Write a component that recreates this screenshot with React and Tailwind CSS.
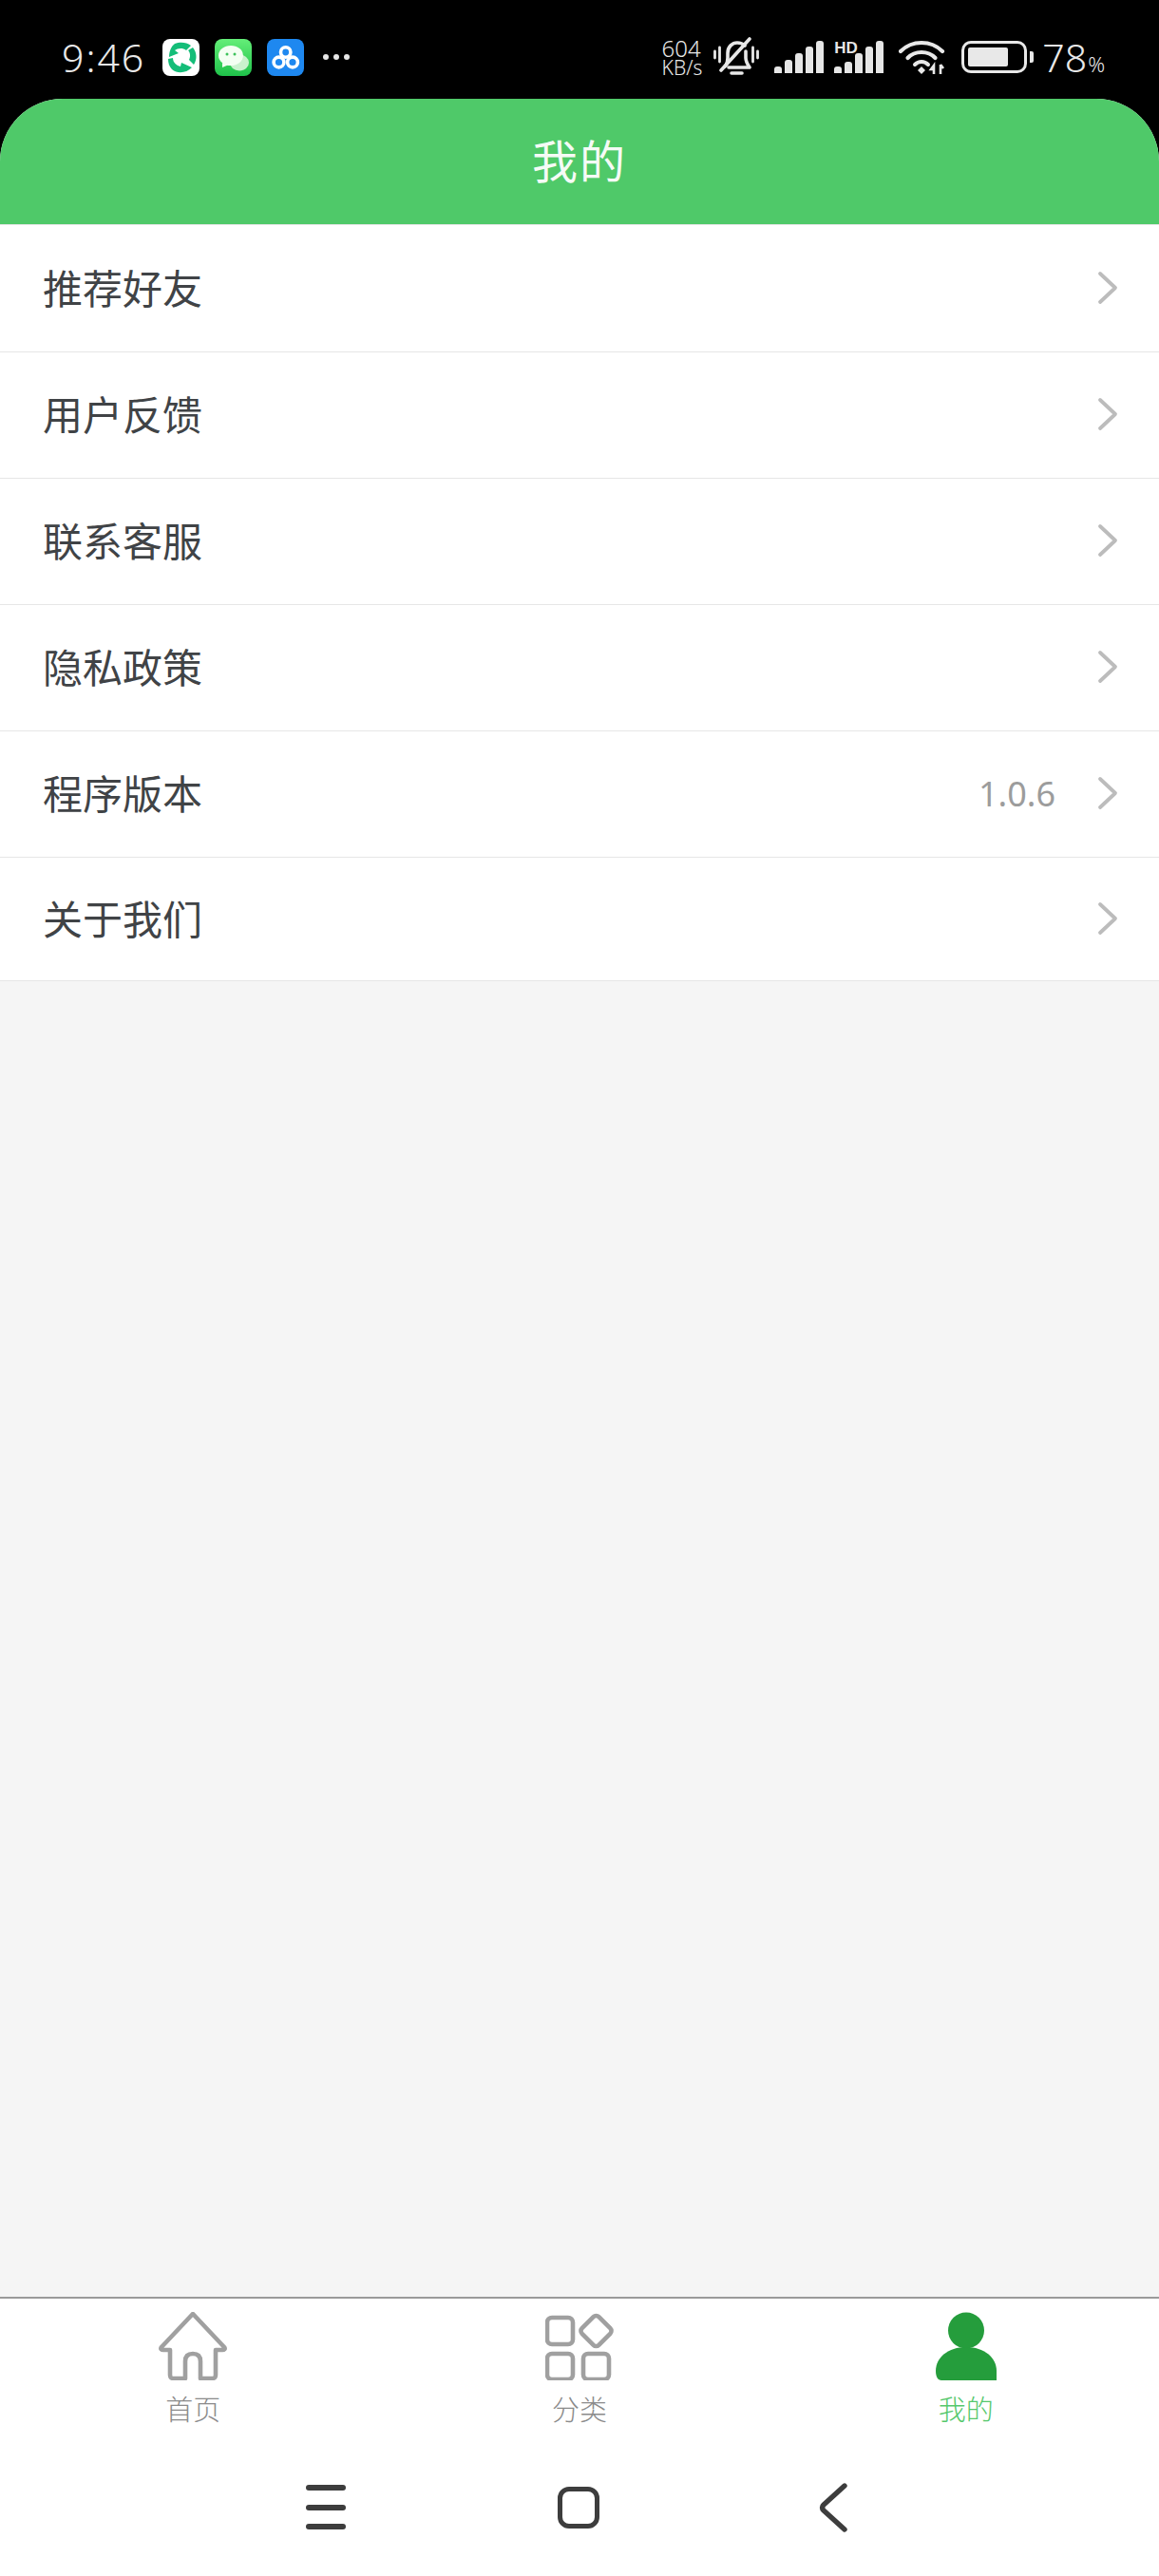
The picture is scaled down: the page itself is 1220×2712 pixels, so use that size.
import React from "react";

const cjk = { fontFamily: '"Noto Sans CJK SC", "Noto Sans", sans-serif' };

const rows = [
  { t: "推荐好友", h: "h-[134px]" },
  { t: "用户反馈", h: "h-[133px]" },
  { t: "联系客服", h: "h-[133px]" },
  { t: "隐私政策", h: "h-[133px]" },
  { t: "程序版本", h: "h-[133px]", v: "1.0.6" },
  { t: "关于我们", h: "h-[130px]" },
];

function Chevron() {
  return (
    <svg width="22" height="36" viewBox="0 0 22 36" fill="none" className="block mb-[2px]">
      <path d="M3 3 L19 18 L3 33" stroke="#bcbcbc" strokeWidth="3.8" strokeLinecap="round" strokeLinejoin="round" />
    </svg>
  );
}

function Row({ t, h, v }) {
  return (
    <div className={`flex items-center bg-white border-b border-[#e6e6e6] pl-[45px] pr-[43px] ${h}`}>
      <span className="text-[42px] leading-none text-[#404346] flex-1 mb-[4px]" style={cjk}>{t}</span>
      {v && <span className="text-[36px] leading-none text-[#9c9c9c] mr-[44px] font-['Noto_Sans',sans-serif] font-normal">{v}</span>}
      <Chevron />
    </div>
  );
}

function AppIcons() {
  return (
    <div className="flex items-center gap-[16px] ml-[18px]">
      <svg width="39" height="39" viewBox="0 0 39 39">
        <rect width="39" height="39" rx="8" fill="#fff" />
        <path d="M13 5 C18 3 25 3 30 7 L25 12 C21 9 16 10 13 12 L17 15 L7 19 C7 13 9 8 13 5 Z" fill="#14bd78" />
        <path d="M32 9 C36 14 37 21 33 27 L28 22 C30 18 29 14 27 12 Z" fill="#14bd78" />
        <path d="M6 21 L11 20 C11 25 15 28 19 29 L20 25 L31 30 C25 36 16 37 10 32 C7 29 6 25 6 21 Z" fill="#14bd78" />
      </svg>
      <svg width="39" height="39" viewBox="0 0 39 39">
        <defs>
          <linearGradient id="wx" x1="0" y1="0" x2="0" y2="1">
            <stop offset="0" stopColor="#64ee78" />
            <stop offset="1" stopColor="#1fc24a" />
          </linearGradient>
        </defs>
        <rect width="39" height="39" rx="8" fill="url(#wx)" />
        <ellipse cx="26" cy="25" rx="10" ry="8.5" fill="#c9f2cd" />
        <ellipse cx="17" cy="17.5" rx="13" ry="10.5" fill="#f3fff2" />
        <path d="M8 25 L8 30 L15 27 Z" fill="#f3fff2" />
        <circle cx="13" cy="16" r="1.5" fill="#3cc25a" />
        <circle cx="21" cy="16" r="1.5" fill="#3cc25a" />
      </svg>
      <svg width="39" height="39" viewBox="0 0 39 39">
        <rect width="39" height="39" rx="8" fill="#1e88f0" />
        <g fill="none" stroke="#fff" strokeWidth="3.6">
          <circle cx="19.7" cy="14" r="5.2" />
          <circle cx="12.5" cy="24.5" r="5.4" />
          <circle cx="27" cy="24.5" r="5.4" />
        </g>
      </svg>
      <div className="flex items-center gap-[5px] ml-[4px]">
        <div className="w-[6px] h-[6px] rounded-full bg-[#e6e6e6]" />
        <div className="w-[6px] h-[6px] rounded-full bg-[#e6e6e6]" />
        <div className="w-[6px] h-[6px] rounded-full bg-[#e6e6e6]" />
      </div>
    </div>
  );
}

function Bell() {
  return (
    <svg width="48" height="42" viewBox="0 0 48 42" fill="none" stroke="#e8e8e8" className="block">
      <path d="M1.5 15 V22 M6.5 11 V26 M46.5 15 V22 M41.5 11 V26" strokeWidth="2.8" strokeLinecap="round" />
      <path d="M12 31 C14 29 15 26 15 22 V17 C15 10 20 6 25 6 C28 6 31 7 33 9 M34 15 V22 C34 26 36 29 38 32 H16" strokeWidth="3.6" strokeLinecap="round" strokeLinejoin="round" />
      <path d="M8 35 L38 2" strokeWidth="3.6" strokeLinecap="round" />
      <path d="M19 38 H30" strokeWidth="3.6" strokeLinecap="round" />
    </svg>
  );
}

function Signal({ hd }) {
  const hs = [7, 14, 21, 28, 34];
  return (
    <div className="relative w-[54px] h-[34px] flex items-end gap-[3.6px]">
      {hs.map((x, i) => (
        <div
          key={i}
          className="bg-[#e6e6e6] w-[7.4px] rounded-t-[3px]"
          style={{ height: hd && i < 2 ? Math.min(x, 8 + i * 4) : x }}
        />
      ))}
      {hd && (
        <span className="absolute left-0 top-[-1px] text-[17px] leading-none font-bold text-[#e6e6e6] font-['Liberation_Sans',sans-serif]">
          HD
        </span>
      )}
    </div>
  );
}

function Wifi() {
  return (
    <svg width="50" height="38" viewBox="0 0 50 38" fill="none" stroke="#e8e8e8" className="block">
      <path d="M2 13 C14 1 34 1 46 13" strokeWidth="4.2" strokeLinecap="round" />
      <path d="M9.5 20 C17 12 31 12 38.5 20" strokeWidth="4.2" strokeLinecap="round" />
      <path d="M17 27 C21 23 27 23 31 27" strokeWidth="4" strokeLinecap="round" />
      <path d="M20 33 L24 29 L28 33 L24 37 Z" fill="#e8e8e8" stroke="none" />
      <path d="M37 37 V28 M34 32 L37 28 V32 Z M44 27 V37 M44 27 L47 31" strokeWidth="2.6" />
    </svg>
  );
}

function Battery() {
  return (
    <div className="flex items-center gap-[3px]">
      <div className="w-[69px] h-[34px] rounded-[10px] border-[3px] border-[#e8e8e8] p-[4px]">
        <div className="h-full bg-[#e8e8e8] rounded-[2px] w-[42px]" />
      </div>
      <div className="w-[4px] h-[12px] bg-[#e8e8e8] rounded-r-[2px]" />
    </div>
  );
}

function StatusBar() {
  return (
    <div className="h-[104px] bg-black flex items-center justify-between pt-[16px] pl-[65px] pr-[57px] text-[#e8e8e8] font-['Noto_Sans',sans-serif]">
      <div className="flex items-center">
        <span className="text-[41px] leading-none font-light tracking-[2px]">9:46</span>
        <AppIcons />
      </div>
      <div className="flex items-center">
        <div className="flex flex-col items-start font-light mr-[12px]">
          <span className="text-[24px] leading-[21px]">604</span>
          <span className="text-[21px] leading-[20px]">KB/s</span>
        </div>
        <Bell />
        <div className="ml-[16px]"><Signal /></div>
        <div className="ml-[9px]"><Signal hd /></div>
        <div className="ml-[14px]"><Wifi /></div>
        <div className="ml-[16px]"><Battery /></div>
        <div className="ml-[9px] flex items-baseline font-light">
          <span className="text-[41px] leading-none">78</span>
          <span className="text-[22px] leading-none ml-[1px]">%</span>
        </div>
      </div>
    </div>
  );
}

function HomeIcon() {
  return (
    <svg width="72" height="72" viewBox="0 0 72 72" fill="none" className="block">
      <path
        d="M36 2 L69 37 C70.5 39 69 40 67 40 H60 V66 C60 69 59 70 56 70 H44 V52 C44 46 41 44 36 44 C31 44 28 46 28 52 V70 H16 C13 70 12 69 12 66 V40 H5 C3 40 1.5 39 3 37 Z"
        stroke="#a0a0a0"
        strokeWidth="4.6"
        strokeLinejoin="round"
      />
    </svg>
  );
}

function GridIcon() {
  return (
    <svg width="72" height="72" viewBox="0 0 72 72" fill="none" stroke="#a0a0a0" strokeWidth="4.6" className="block">
      <rect x="2" y="6" width="27" height="28" rx="5" />
      <rect x="2" y="44" width="27" height="27" rx="5" />
      <rect x="40" y="44" width="27" height="27" rx="5" />
      <rect x="41" y="7.5" width="25" height="25" rx="4" transform="rotate(45 53.5 20)" />
    </svg>
  );
}

function UserIcon() {
  return (
    <svg width="64" height="72" viewBox="0 0 64 72" className="block">
      <circle cx="32" cy="19.5" r="19" fill="#259d3c" />
      <path d="M0 62 C0 48 13 37 32 37 C51 37 64 48 64 62 V72 H6 C2 72 0 68 0 62 Z" fill="#259d3c" />
    </svg>
  );
}

function Tab({ icon, label, active }) {
  return (
    <div className="flex flex-col items-center">
      <div className="h-[72px] flex items-center justify-center">{icon}</div>
      <span className={`mt-[13px] text-[29px] leading-[32px] font-light ${active ? "text-[#55c86c]" : "text-[#8b8b8b]"}`} style={cjk}>
        {label}
      </span>
    </div>
  );
}

function NavBar() {
  return (
    <div className="flex-1 flex items-center justify-center pt-[16px] pr-[6px]">
      <div className="flex items-center">
        <div className="w-[42px] flex flex-col gap-[14.5px]">
          <div className="h-[6px] rounded-full bg-[#3d3d3d]" />
          <div className="h-[6px] rounded-full bg-[#3d3d3d]" />
          <div className="h-[6px] rounded-full bg-[#3d3d3d]" />
        </div>
        <div className="w-[44px] h-[44px] ml-[223px] rounded-[12px] border-[5px] border-[#3d3d3d]" />
        <svg width="30" height="52" viewBox="0 0 30 52" fill="none" className="block ml-[231px]">
          <path d="M27 3 L5 23 C3 25 3 27 5 29 L27 49" stroke="#3d3d3d" strokeWidth="5.4" strokeLinecap="round" strokeLinejoin="round" />
        </svg>
      </div>
    </div>
  );
}

export default function App() {
  return (
    <div className="w-[1220px] h-[2712px] bg-black flex flex-col overflow-hidden">
      <StatusBar />
      <div className="flex-1 flex flex-col bg-[#f5f5f5] rounded-t-[66px] overflow-hidden">
        <div className="h-[132px] bg-[#4fc969] flex items-center justify-center pb-[6px]">
          <span className="text-[48px] leading-none text-[#f5fbf6] tracking-[2px] font-normal" style={cjk}>我的</span>
        </div>
        <div className="flex flex-col border-t border-[#e6e6e6]">
          {rows.map((r) => (
            <Row key={r.t} {...r} />
          ))}
        </div>
        <div className="flex-1" />
        <div className="h-[294px] bg-white border-t-2 border-[#9a9a9a] flex flex-col">
          <div className="grid grid-cols-3 pt-[14px]">
            <Tab icon={<HomeIcon />} label="首页" />
            <Tab icon={<GridIcon />} label="分类" />
            <Tab icon={<UserIcon />} label="我的" active />
          </div>
          <NavBar />
        </div>
      </div>
    </div>
  );
}
